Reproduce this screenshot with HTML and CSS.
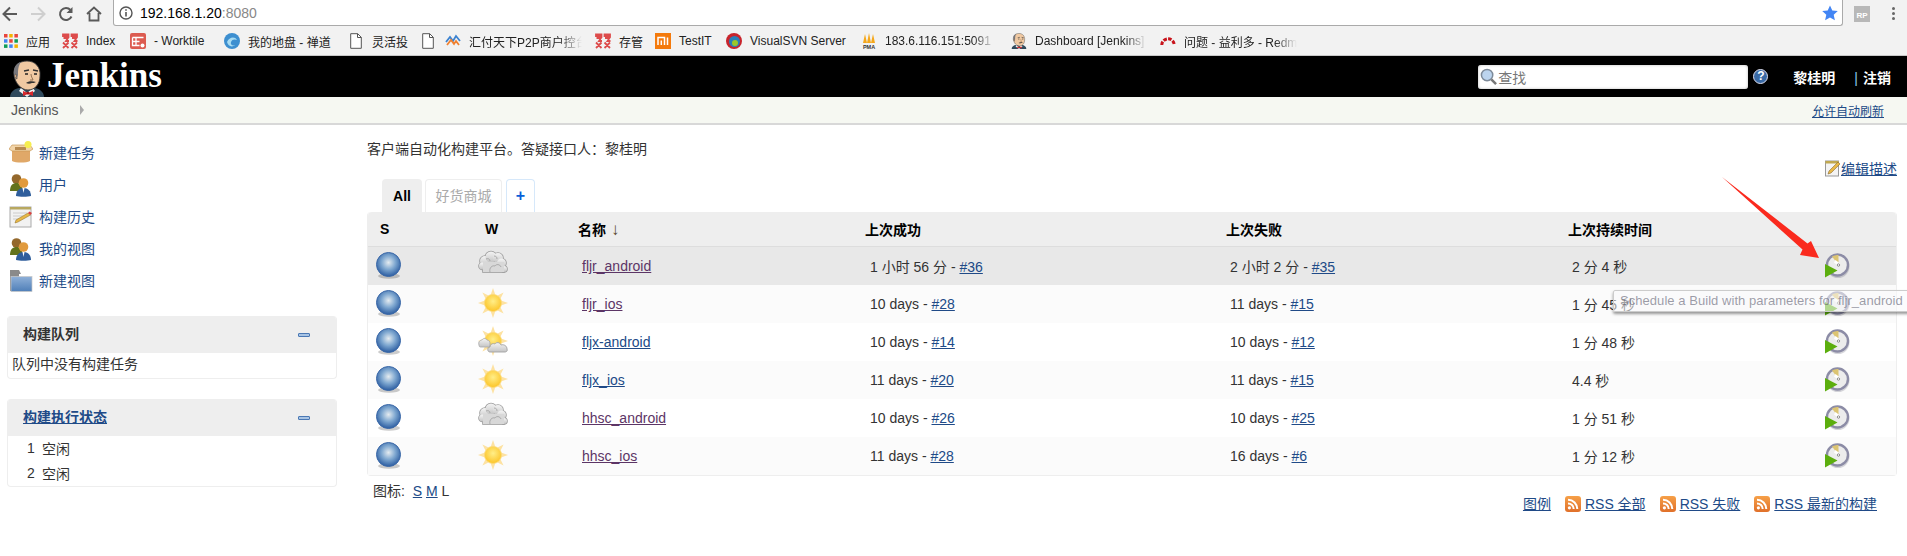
FILE: index.html
```html
<!DOCTYPE html>
<html>
<head>
    <meta http-equiv="Content-Type" content="text/html; charset=utf-8"/>
    <title>Dashboard [Jenkins]</title>
    <link rel="stylesheet" href="styles.css">
</head>
<body>
<svg class="defs" width="0" height="0">
    <defs>
        <radialGradient id="ballFill" cx="50%" cy="42%" r="58%">
            <stop offset="0" stop-color="#e4ebf0"/>
            <stop offset="0.5" stop-color="#7ea7d0"/>
            <stop offset="1" stop-color="#2b5ca0"/>
        </radialGradient>
        <radialGradient id="sunFill" cx="50%" cy="40%" r="60%">
            <stop offset="0" stop-color="#ffee88"/>
            <stop offset="1" stop-color="#fcc427"/>
        </radialGradient>
        <linearGradient id="cloudFill" x1="0" y1="0" x2="0" y2="1">
            <stop offset="0" stop-color="#f4f4f4"/>
            <stop offset="1" stop-color="#c4c4c4"/>
        </linearGradient>
        <linearGradient id="folderFill" x1="0" y1="0" x2="0" y2="1">
            <stop offset="0" stop-color="#8fb0d8"/>
            <stop offset="1" stop-color="#4f7fb8"/>
        </linearGradient>
        <linearGradient id="rssFill" x1="0" y1="0" x2="0" y2="1">
            <stop offset="0" stop-color="#f6a048"/>
            <stop offset="1" stop-color="#e0702a"/>
        </linearGradient>
        <symbol id="ball" viewBox="0 0 26 27">
            <ellipse cx="13" cy="24" rx="11" ry="2.800" fill="#000" opacity="0.2"/>
            <circle cx="12.500" cy="12.500" r="12" fill="url(#ballFill)" stroke="#3a68a8" stroke-width="1"/>
        </symbol>
        <symbol id="sunrays" viewBox="0 0 30 30">
            <g fill="#fde2a2">
                <path d="M15 0l2.400 7h-4.800z"/>
                <path d="M15 30l2.400-7h-4.800z"/>
                <path d="M0 15l7-2.400v4.800z"/>
                <path d="M30 15l-7-2.400v4.800z"/>
                <path d="M4.400 4.400l6.600 3.300-3.300 3.300z"/>
                <path d="M25.600 4.400l-6.600 3.300 3.300 3.300z"/>
                <path d="M4.400 25.600l6.600-3.300-3.300-3.300z"/>
                <path d="M25.600 25.600l-6.600-3.300 3.300-3.300z"/>
            </g>
            <circle cx="15" cy="15" r="8.500" fill="url(#sunFill)" stroke="#fbd977" stroke-width="0.800"/>
        </symbol>
        <symbol id="cloudy" viewBox="0 0 30 30">
            <g fill="#9c9c9c" stroke="#9c9c9c" stroke-width="1.600">
                <circle cx="7" cy="11" r="5"/>
                <circle cx="13" cy="7" r="5.500"/>
                <circle cx="20" cy="8" r="5"/>
                <circle cx="23.500" cy="13" r="4.500"/>
                <circle cx="4.500" cy="16" r="3.500"/>
                <circle cx="26" cy="19" r="3"/>
                <rect x="5" y="14" width="21" height="8"/>
            </g>
            <g fill="url(#cloudFill)">
                <circle cx="7" cy="11" r="5"/>
                <circle cx="13" cy="7" r="5.500"/>
                <circle cx="20" cy="8" r="5"/>
                <circle cx="23.500" cy="13" r="4.500"/>
                <circle cx="4.500" cy="16" r="3.500"/>
                <circle cx="26" cy="19" r="3"/>
            </g>
            <path d="M5 12h21v10H5z" fill="#d8d8d8"/>
            <path d="M8 9c2-1 4 0 4 2M16 6c2 0 3 1 3 3M12 22c-1-4 2-7 5-6 1-2 5-2 6 1" fill="none" stroke="#a4a4a4" stroke-width="0.900"/>
        </symbol>
        <symbol id="partly" viewBox="0 0 30 30">
            <use href="#sunrays" width="30" height="30"/>
            <path d="M1 19c-1-3 1-5 3-5 1-2 4-2 5 0 2 0 3 2 3 3v4H3c-1 0-2 0-2-2z" fill="url(#cloudFill)" stroke="#a8a8a8" stroke-width="0.800"/>
            <path d="M12 26c-3 0-3-5 0-5 0-3 3-4 5-3 1-2 5-2 6 1 3-1 6 1 6 4 1 2-1 3-2 3z" fill="url(#cloudFill)" stroke="#a2a2a2" stroke-width="0.900"/>
        </symbol>
        <symbol id="build" viewBox="0 0 25 25">
            <circle cx="13" cy="13.500" r="11.500" fill="#44445a" opacity="0.22"/>
            <circle cx="12.500" cy="12" r="10.500" fill="#ececec" stroke="#8c8ca6" stroke-width="2.400"/>
            <path d="M13.500 12L7 3.500a10 10 0 0 1 6.500-1.500z" fill="#dcc472"/>
            <path d="M10.500 7l4.500 3.500-1.500 2.500-4.500-3.500z" fill="#fff"/>
            <circle cx="13.500" cy="12" r="1.200" fill="#fff" stroke="#666" stroke-width="0.700"/>
            <path d="M0 11L12.500 17.500 0 24.500z" fill="#5cae0e"/>
        </symbol>
        <symbol id="rss" viewBox="0 0 16 16">
            <rect width="16" height="16" rx="3" fill="url(#rssFill)"/>
            <circle cx="4.400" cy="11.800" r="1.600" fill="#fff"/>
            <path d="M3 7.400a5.700 5.700 0 0 1 5.700 5.700M3 3.800a9.300 9.300 0 0 1 9.300 9.300" fill="none" stroke="#fff" stroke-width="2"/>
        </symbol>
        <symbol id="butler" viewBox="0 0 34 37">
            <path d="M0 37c0-5 5-9 10-9h14c5 0 10 4 10 9z" fill="#2f4a5c"/>
            <path d="M11 28l6 5 6-5 2 3-8 6-8-6z" fill="#f3f3f3"/>
            <path d="M4 15C3 6 9 1 17 1s14 6 13 15c0 8-5 14-12 14S5 23 4 15z" fill="#f0c9a2" stroke="#3b3b3b" stroke-width="0.900"/>
            <path d="M4 15C3 8 6 3 11 2 8 6 8 11 8 15l-1 4c-2 0-3-2-3-4z" fill="#77777c"/>
            <path d="M6 14c-2 0-2 4 1 5z" fill="#e0b48c" stroke="#3b3b3b" stroke-width="0.500"/>
            <path d="M14 11l5-1M23 10l5 1" stroke="#333" stroke-width="1.300" fill="none"/>
            <path d="M15 14h3M24 14h3" stroke="#222" stroke-width="1.300"/>
            <path d="M21 14c0 3 2 5 2 6h-3" fill="none" stroke="#7a5a40" stroke-width="0.800"/>
            <path d="M16 23c2-2 7-2 10-1-2 1-2 1-4 1-2 1-4 1-6 0z" fill="#333"/>
            <path d="M13 31l5 2 5-2v5l-5-2-5 2z" fill="#d8282c"/>
            <circle cx="18" cy="33.200" r="1.400" fill="#a81418"/>
        </symbol>
        <symbol id="zen" viewBox="0 0 16 16">
            <path d="M1 1.500h5.500v1.500H1zM9.500 1.500H15v1.500H9.500zM1.500 5h4.500l-2 3h3M10 5h4.500l-2 3h3M1 9.500l5.500 5.500M6.500 9.500L1 15M9.500 9.500L15 15M15 9.500L9.500 15" fill="none" stroke="#dd4b4b" stroke-width="1.800"/>
        </symbol>
        <symbol id="doc" viewBox="0 0 12 16">
            <path d="M.7.700h7l3.600 3.600v11H.7z" fill="#fff" stroke="#555"/>
            <path d="M7.500.7v3.800h3.800" fill="none" stroke="#555"/>
        </symbol>
        <symbol id="users" viewBox="0 0 24 24">
            <circle cx="7.500" cy="6" r="4.800" fill="#94682c"/>
            <path d="M1 18c0-6 3-8 6.500-8s6 2 6 8z" fill="#62721c"/>
            <circle cx="14.500" cy="10" r="4.800" fill="#e19a3c"/>
            <path d="M7 23c0-5 3-8 7.500-8s7.500 3 7.500 8c-3 1-12 1-15 0z" fill="#2f5e9c"/>
            <path d="M13.500 15h2l-1 5z" fill="#fff"/>
        </symbol>
    </defs>
</svg>

<div class="browser-top">
    <svg class="nav-icon" viewBox="0 0 16 16"><path d="M15 8H2M8 1.500L1.500 8 8 14.500" fill="none" stroke="#5a5a5a" stroke-width="2"/></svg>
    <svg class="nav-icon" viewBox="0 0 16 16"><path d="M1 8h13M8 1.500L14.500 8 8 14.500" fill="none" stroke="#cfcfcf" stroke-width="2"/></svg>
    <svg class="nav-icon" viewBox="0 0 16 16"><path d="M13.500 10.500A6 6 0 1 1 12.500 4" fill="none" stroke="#5a5a5a" stroke-width="2"/><path d="M14.500 1v6h-6z" fill="#5a5a5a"/></svg>
    <svg class="nav-icon" viewBox="0 0 16 16"><path d="M1 8l7-6.500L15 8M3.500 7v7.500h9V7" fill="none" stroke="#5a5a5a" stroke-width="1.800"/></svg>
    <div class="url-box">
        <svg class="url-info" viewBox="0 0 14 14"><circle cx="7" cy="7" r="6" fill="none" stroke="#555" stroke-width="1.400"/><path d="M7 6v4.500M7 3.200v1.600" stroke="#555" stroke-width="1.600"/></svg>
        <span class="url-host">192.168.1.20</span><span class="url-port">:8080</span>
        <svg class="url-star" viewBox="0 0 16 16"><path d="M8 .5l2.300 5 5.500.6-4.100 3.700 1.200 5.400L8 12.400l-4.900 2.800 1.200-5.400L.2 6.100l5.500-.6z" fill="#4285f4"/></svg>
    </div>
    <div class="ext-rp">RP</div>
    <div class="menu-dots"><i></i><i></i><i></i></div>
</div>

<div class="bookmarks">
    <div class="bm bm-apps"><svg class="bm-icon" viewBox="0 0 16 16"><g><rect x="1" y="1" width="3.500" height="3.500" fill="#e8453c"/><rect x="6.200" y="1" width="3.500" height="3.500" fill="#f4b400"/><rect x="11.400" y="1" width="3.500" height="3.500" fill="#e8453c"/><rect x="1" y="6.200" width="3.500" height="3.500" fill="#4285f4"/><rect x="6.200" y="6.200" width="3.500" height="3.500" fill="#e8453c"/><rect x="11.400" y="6.200" width="3.500" height="3.500" fill="#0f9d58"/><rect x="1" y="11.400" width="3.500" height="3.500" fill="#0f9d58"/><rect x="6.200" y="11.400" width="3.500" height="3.500" fill="#4285f4"/><rect x="11.400" y="11.400" width="3.500" height="3.500" fill="#f4b400"/></g></svg><span>应用</span></div>
    <div class="bm bm-index"><svg class="bm-icon"><use href="#zen"/></svg><span>Index</span></div>
    <div class="bm bm-worktile"><svg class="bm-icon" viewBox="0 0 16 16"><rect width="16" height="16" rx="2" fill="#dc5b50"/><path d="M2.500 4.500h11M2.500 4.500v8h7M6 4.500v8M2.500 8.500h7" fill="none" stroke="#fff" stroke-width="1.300"/><circle cx="12.500" cy="12.500" r="2" fill="#fff"/></svg><span>- Worktile</span></div>
    <div class="bm bm-zentao"><svg class="bm-icon" viewBox="0 0 16 16"><circle cx="8" cy="8" r="8" fill="#3d8fd0"/><path d="M3 9c2-5 8-6 10-2-2-1-5-1-6 2s2 4 4 3c-3 3-7 1-8-3z" fill="#a8dcf2"/></svg><span>我的地盘 - 禅道</span></div>
    <div class="bm bm-doc"><svg class="bm-icon"><use href="#doc"/></svg><span>灵活投</span></div>
    <div class="bm bm-doc2"><svg class="bm-icon"><use href="#doc"/></svg></div>
    <div class="bm bm-huifu"><svg class="bm-icon" viewBox="0 0 16 16"><path d="M1 9l4-5 3 4 3-5 4 5" fill="none" stroke="#3b82d0" stroke-width="1.800"/><path d="M2 12l4-5 3 4 2-3 3 4" fill="none" stroke="#f08030" stroke-width="1.800"/></svg><span class="bm-fade">汇付天下P2P商户控台</span></div>
    <div class="bm bm-cunguan"><svg class="bm-icon"><use href="#zen"/></svg><span>存管</span></div>
    <div class="bm bm-testit"><svg class="bm-icon" viewBox="0 0 16 16"><rect width="16" height="16" fill="#f47a0c"/><path d="M3 12V4.500h6.500V12M6.300 7.500V12M12.500 4.500V12" fill="none" stroke="#fff" stroke-width="1.500"/></svg><span>TestIT</span></div>
    <div class="bm bm-vsvn"><svg class="bm-icon" viewBox="0 0 16 16"><circle cx="8" cy="8" r="8" fill="#c8242c"/><circle cx="8.500" cy="8.500" r="5.500" fill="#2a7fb8"/><circle cx="9" cy="10" r="3" fill="#9cc82a"/></svg><span>VisualSVN Server</span></div>
    <div class="bm bm-pma"><svg class="bm-icon" viewBox="0 0 16 16"><path d="M2 10l2-9 2 9zM6 10l2-10 2 10zM10 10l2-9 2 9z" fill="#f5a81c"/><text x="8" y="15.500" class="pma-text">PMA</text></svg><span class="bm-fade">183.6.116.151:5091</span></div>
    <div class="bm bm-jenkins"><svg class="bm-icon"><use href="#butler"/></svg><span class="bm-fade">Dashboard [Jenkins]</span></div>
    <div class="bm bm-redmine"><svg class="bm-icon" viewBox="0 0 16 16"><path d="M1.800 15A6.200 6.200 0 0 1 14.200 15" fill="none" stroke="#c8141c" stroke-width="3" stroke-dasharray="3.500 1.300" transform="translate(0 -3)"/></svg><span class="bm-fade">问题 - 益利多 - Redmine</span></div>
</div>

<header class="site-header">
    <a class="logo"><svg class="logo-img"><use href="#butler"/></svg><span class="logo-text">Jenkins</span></a>
    <div class="header-right">
        <div class="search-box">
            <svg class="search-icon" viewBox="0 0 18 18"><circle cx="7.500" cy="7.500" r="6" fill="#bcd4ee" stroke="#7d8a99" stroke-width="1.600"/><path d="M12 12l5 5" stroke="#777" stroke-width="2.600"/></svg>
            <span class="search-hint">查找</span>
        </div>
        <div class="help-icon">?</div>
        <a class="user-name">黎桂明</a>
        <span class="logout"><i class="logout-bar">|</i>注销</span>
    </div>
</header>

<div class="breadcrumb">
    <span class="crumb">Jenkins</span>
    <span class="crumb-arrow"></span>
    <a class="auto-refresh" href="#">允许自动刷新</a>
</div>

<div class="page-body">
    <aside class="side-panel">
        <div class="tasks">
            <a class="task">
                <svg class="task-icon" viewBox="0 0 24 24"><path d="M3 8h18v12c-4 2-14 2-18 0z" fill="#e0a868"/><path d="M0 8l3-4h18l3 4-3 2H3z" fill="#f2d4a8" stroke="#c89858" stroke-width="0.700"/><path d="M6 6h11v3H6z" fill="#b88a50"/><circle cx="19" cy="3.500" r="3.500" fill="#f6ee50"/></svg>
                <span>新建任务</span>
            </a>
            <a class="task"><svg class="task-icon"><use href="#users"/></svg><span>用户</span></a>
            <a class="task">
                <svg class="task-icon" viewBox="0 0 24 24"><rect x="1" y="2" width="21" height="20" fill="#f2f2f2" stroke="#aaa"/><path d="M1 2h21v2.500H1z" fill="#b8a860"/><path d="M4 8h14M4 11h10M4 14h7" stroke="#ccc" stroke-width="1.200"/><path d="M6 18l1-3L19 8l2.500 2L9 17z" fill="#e8b848" stroke="#8a6a20" stroke-width="0.500"/><path d="M19 8l2.500 2 1.500-2-2.500-1.500z" fill="#d84040"/></svg>
                <span>构建历史</span>
            </a>
            <a class="task"><svg class="task-icon"><use href="#users"/></svg><span>我的视图</span></a>
            <a class="task">
                <svg class="task-icon" viewBox="0 0 24 24"><path d="M1 22V1h9l2 4h-2v3h12v14z" fill="#8a8a8a"/><rect x="2" y="7.500" width="21" height="15" fill="url(#folderFill)" stroke="#c8c8c8" stroke-width="0.700"/></svg>
                <span>新建视图</span>
            </a>
        </div>

        <div class="pane">
            <div class="pane-head"><span class="pane-title">构建队列</span><i class="collapse"></i></div>
            <div class="pane-body queue-empty">队列中没有构建任务</div>
        </div>

        <div class="pane">
            <div class="pane-head"><a class="pane-title pane-link" href="#">构建执行状态</a><i class="collapse"></i></div>
            <div class="pane-body">
                <div class="executor"><span class="exec-num">1</span><span>空闲</span></div>
                <div class="executor"><span class="exec-num">2</span><span>空闲</span></div>
            </div>
        </div>
    </aside>

    <main class="main-panel">
        <div class="desc-row">
            <div class="description">客户端自动化构建平台。答疑接口人：黎桂明</div>
            <a class="edit-desc" href="#">
                <svg class="edit-icon" viewBox="0 0 16 18"><rect x="0.500" y="2" width="13" height="15" fill="#f4f4f4" stroke="#999"/><path d="M0.500 2h13v2.500H.5z" fill="#c0a850"/><path d="M3 15l1-3 9-9 2 2-9 9z" fill="#e8b848" stroke="#7a5a20" stroke-width="0.500"/></svg><span>编辑描述</span>
            </a>
        </div>

        <div class="tabs">
            <span class="tab tab-active">All</span>
            <span class="tab tab-other">好货商城</span>
            <span class="tab tab-add">+</span>
        </div>

        <table class="projects">
            <thead>
                <tr>
                    <th>S</th>
                    <th>W</th>
                    <th>名称<span class="sort-arrow">↓</span></th>
                    <th>上次成功</th>
                    <th>上次失败</th>
                    <th>上次持续时间</th>
                    <th></th>
                </tr>
            </thead>
            <tbody>
                <tr class="row-hover">
                    <td><svg class="ball"><use href="#ball"/></svg></td>
                    <td><svg class="weather"><use href="#cloudy"/></svg></td>
                    <td><a class="seen" href="#">fljr_android</a></td>
                    <td>1 小时 56 分 - <a href="#">#36</a></td>
                    <td>2 小时 2 分 - <a href="#">#35</a></td>
                    <td>2 分 4 秒</td>
                    <td><svg class="build-icon"><use href="#build"/></svg></td>
                </tr>
                <tr class="row-alt">
                    <td><svg class="ball"><use href="#ball"/></svg></td>
                    <td><svg class="weather"><use href="#sunrays"/></svg></td>
                    <td><a class="seen" href="#">fljr_ios</a></td>
                    <td>10 days - <a href="#">#28</a></td>
                    <td>11 days - <a href="#">#15</a></td>
                    <td>1 分 45 秒</td>
                    <td><svg class="build-icon"><use href="#build"/></svg></td>
                </tr>
                <tr>
                    <td><svg class="ball"><use href="#ball"/></svg></td>
                    <td><svg class="weather"><use href="#partly"/></svg></td>
                    <td><a href="#">fljx-android</a></td>
                    <td>10 days - <a href="#">#14</a></td>
                    <td>10 days - <a href="#">#12</a></td>
                    <td>1 分 48 秒</td>
                    <td><svg class="build-icon"><use href="#build"/></svg></td>
                </tr>
                <tr class="row-alt">
                    <td><svg class="ball"><use href="#ball"/></svg></td>
                    <td><svg class="weather"><use href="#sunrays"/></svg></td>
                    <td><a href="#">fljx_ios</a></td>
                    <td>11 days - <a href="#">#20</a></td>
                    <td>11 days - <a href="#">#15</a></td>
                    <td>4.4 秒</td>
                    <td><svg class="build-icon"><use href="#build"/></svg></td>
                </tr>
                <tr>
                    <td><svg class="ball"><use href="#ball"/></svg></td>
                    <td><svg class="weather"><use href="#cloudy"/></svg></td>
                    <td><a class="seen" href="#">hhsc_android</a></td>
                    <td>10 days - <a href="#">#26</a></td>
                    <td>10 days - <a href="#">#25</a></td>
                    <td>1 分 51 秒</td>
                    <td><svg class="build-icon"><use href="#build"/></svg></td>
                </tr>
                <tr class="row-alt">
                    <td><svg class="ball"><use href="#ball"/></svg></td>
                    <td><svg class="weather"><use href="#sunrays"/></svg></td>
                    <td><a class="seen" href="#">hhsc_ios</a></td>
                    <td>11 days - <a href="#">#28</a></td>
                    <td>16 days - <a href="#">#6</a></td>
                    <td>1 分 12 秒</td>
                    <td><svg class="build-icon"><use href="#build"/></svg></td>
                </tr>
            </tbody>
        </table>

        <div class="below-table">
            <div class="icon-size">图标: <a href="#">S</a> <a href="#">M</a> <span>L</span></div>
            <div class="legend">
                <a href="#">图例</a>
                <span class="rss-item"><svg class="rss-icon"><use href="#rss"/></svg><a href="#">RSS 全部</a></span>
                <span class="rss-item"><svg class="rss-icon"><use href="#rss"/></svg><a href="#">RSS 失败</a></span>
                <span class="rss-item"><svg class="rss-icon"><use href="#rss"/></svg><a href="#">RSS 最新的构建</a></span>
            </div>
        </div>
    </main>
</div>

<div class="tooltip">Schedule a Build with parameters for fljr_android</div>
<svg class="red-arrow" viewBox="0 0 110 92"><path d="M2 2L87.500 68.400 91 66 99 83 80 80 82.500 74.600z" fill="#fa2a1e"/></svg>
</body>
</html>
```

FILE: styles.css
```css
html, body {
    margin: 0;
    padding: 0;
    overflow: hidden;
}
body {
    position: relative;
    height: 556px;
    background-color: #fff;
    color: #333;
    font-family: "Liberation Sans", "Noto Sans CJK SC", sans-serif;
    font-size: 14px;
}
a {
    color: #204a87;
    text-decoration: underline;
}
.defs {
    position: absolute;
}

/* browser chrome */
.browser-top {
    display: flex;
    align-items: center;
    height: 27px;
    padding-left: 2px;
    background-color: #f2f2f2;
}
.nav-icon {
    flex: none;
    width: 16px;
    height: 16px;
    margin-right: 12px;
}
.url-box {
    display: flex;
    align-items: center;
    flex: none;
    width: 1730px;
    height: 26px;
    margin: -1px 0 0 -1px;
    box-sizing: border-box;
    padding-left: 5px;
    background-color: #fff;
    border: 1px solid #aaa;
    border-top: none;
    border-radius: 0 0 3px 3px;
    font-size: 14px;
}
.url-info {
    width: 14px;
    height: 14px;
    margin-right: 7px;
}
.url-host {
    color: #000;
}
.url-port {
    color: #888;
}
.url-star {
    width: 16px;
    height: 16px;
    margin-left: auto;
    margin-right: 4px;
}
.ext-rp {
    flex: none;
    width: 16px;
    height: 16px;
    margin-left: 11px;
    background-color: #b8b8b8;
    color: #fff;
    font-size: 8px;
    font-weight: bold;
    line-height: 20px;
    text-align: center;
}
.menu-dots {
    display: flex;
    flex-direction: column;
    gap: 2px;
    margin-left: 22px;
}
.menu-dots i {
    width: 3px;
    height: 3px;
    background-color: #666;
    border-radius: 50%;
}

.bookmarks {
    display: flex;
    align-items: center;
    height: 28px;
    padding-left: 3px;
    background-color: #f2f2f2;
    border-bottom: 1px solid #c8c8c8;
    font-size: 12px;
    color: #222;
    white-space: nowrap;
}
.bm {
    display: flex;
    align-items: center;
    flex: none;
    gap: 8px;
    overflow: hidden;
}
.bm-icon {
    flex: none;
    width: 16px;
    height: 16px;
}
.bm-fade {
    overflow: hidden;
    -webkit-mask-image: linear-gradient(to right, #000 80%, transparent 100%);
    mask-image: linear-gradient(to right, #000 80%, transparent 100%);
}
.bm-apps { width: 59px; gap: 7px; }
.bm-index { width: 68px; }
.bm-worktile { width: 94px; }
.bm-zentao { width: 124px; }
.bm-doc { width: 72px; }
.bm-doc2 { width: 25px; }
.bm-huifu { width: 150px; }
.bm-huifu .bm-fade { width: 113px; }
.bm-cunguan { width: 60px; }
.bm-testit { width: 71px; }
.bm-vsvn { width: 135px; }
.bm-pma { width: 150px; }
.bm-pma .bm-fade { width: 110px; }
.bm-jenkins { width: 149px; }
.bm-jenkins .bm-fade { width: 112px; }
.bm-redmine { width: 150px; }
.bm-redmine .bm-fade { width: 113px; }
.pma-text {
    fill: #333;
    font-size: 5.500px;
    font-weight: bold;
    text-anchor: middle;
}

/* jenkins header */
.site-header {
    display: flex;
    align-items: center;
    height: 41px;
    background-color: #000;
    color: #fff;
}
.logo {
    display: flex;
    align-items: flex-end;
    height: 100%;
    padding-left: 10px;
    text-decoration: none;
}
.logo-img {
    width: 34px;
    height: 37px;
}
.logo-text {
    display: inline-block;
    height: 39px;
    margin: 0 0 2px 3px;
    color: #fff;
    font-family: "Liberation Serif", serif;
    font-size: 35px;
    font-weight: bold;
    line-height: 39px;
}
.header-right {
    display: flex;
    align-items: center;
    margin-left: auto;
}
.search-box {
    display: flex;
    align-items: center;
    box-sizing: border-box;
    width: 270px;
    height: 24px;
    padding-left: 2px;
    background-color: #fff;
    border-radius: 3px;
    box-shadow: inset 0 0 3px #bbb;
}
.search-icon {
    width: 17px;
    height: 17px;
}
.search-hint {
    margin-left: 1px;
    color: #777;
    font-size: 14px;
}
.help-icon {
    width: 15px;
    height: 15px;
    margin-left: 5px;
    border-radius: 50%;
    background-color: #3a6aa5;
    border: 1px solid #dde;
    box-sizing: border-box;
    color: #fff;
    font-size: 12px;
    font-weight: bold;
    line-height: 13px;
    text-align: center;
}
.user-name {
    margin-left: 25px;
    color: #fff;
    font-weight: bold;
    text-decoration: none;
}
.logout {
    margin: 0 16px 0 19px;
    color: #fff;
    font-weight: bold;
}
.logout-bar {
    margin-right: 5px;
    color: #8cc4ee;
    font-style: normal;
    font-weight: normal;
}

.breadcrumb {
    display: flex;
    align-items: center;
    box-sizing: border-box;
    height: 28px;
    padding: 0 23px 0 11px;
    background-color: #f6f8f2;
    border-bottom: 2px solid #d8d8d8;
}
.crumb {
    color: #555;
}
.crumb-arrow {
    width: 0;
    height: 0;
    margin-left: 22px;
    border-left: 4px solid #aaa;
    border-top: 5px solid transparent;
    border-bottom: 5px solid transparent;
}
.auto-refresh {
    margin-left: auto;
    font-size: 12px;
}

/* page */
.page-body {
    display: flex;
}
.side-panel {
    flex: none;
    box-sizing: border-box;
    width: 367px;
    padding: 12px 30px 0 7px;
}
.tasks {
    margin-bottom: 19px;
}
.task {
    display: flex;
    align-items: center;
    gap: 6px;
    height: 32px;
    padding-left: 2px;
    color: #204a87;
    text-decoration: none;
}
.task span {
    margin-bottom: 2px;
}
.task-icon {
    flex: none;
    width: 24px;
    height: 24px;
}
.pane {
    margin-bottom: 20px;
    border: 1px solid #eee;
    border-top: none;
    border-radius: 4px;
    overflow: hidden;
}
.pane-head {
    display: flex;
    align-items: center;
    justify-content: space-between;
    height: 37px;
    padding: 0 26px 0 15px;
    background-color: #eee;
}
.pane-title {
    margin-bottom: 3px;
    color: #333;
    font-weight: bold;
}
.pane-link {
    color: #204a87;
}
.collapse {
    width: 10px;
    height: 2px;
    border: 1px solid #4a78b4;
    border-radius: 1px;
    background-color: #a8c4e4;
}
.queue-empty {
    padding: 1px 0 4px 4px;
    line-height: 20px;
}
.executor {
    display: flex;
    align-items: center;
    box-sizing: border-box;
    height: 25px;
    padding: 0 0 2px 19px;
}
.exec-num {
    width: 15px;
}

.main-panel {
    flex: none;
    width: 1530px;
}
.desc-row {
    display: flex;
    justify-content: space-between;
    height: 40px;
    margin-top: 14px;
}
.description {
    line-height: 20px;
}
.edit-desc {
    display: flex;
    align-items: center;
    align-self: flex-end;
    height: 20px;
    margin-bottom: 1px;
}
.edit-icon {
    width: 16px;
    height: 18px;
}
.tabs {
    display: flex;
    align-items: flex-end;
    gap: 3px;
    height: 33px;
    padding-left: 15px;
}
.tab {
    box-sizing: border-box;
    height: 33px;
    line-height: 34px;
    text-align: center;
    border-radius: 4px 4px 0 0;
}
.tab-active {
    width: 40px;
    background-color: #eee;
    color: #000;
    font-weight: bold;
}
.tab-other {
    width: 77px;
    line-height: 32px;
    border: 1px solid #eee;
    border-bottom: none;
    color: #aaa;
}
.tab-add {
    width: 29px;
    margin-left: 1px;
    line-height: 32px;
    border: 1px solid #d6e8fa;
    border-bottom: none;
    color: #0a5fd8;
    font-weight: bold;
    font-size: 16px;
}

.projects {
    width: 100%;
    table-layout: fixed;
    border-collapse: separate;
    border-spacing: 0;
    border: 1px solid #eee;
    border-top: none;
    border-radius: 4px;
    box-sizing: border-box;
}
.projects th {
    box-sizing: border-box;
    height: 35px;
    padding: 0 0 1px;
    text-align: left;
    color: #000;
    background-color: #eee;
    border-bottom: 1px solid #ddd;
}
.projects td {
    height: 38px;
    padding: 0;
    vertical-align: middle;
}
.projects th:first-child {
    border-top-left-radius: 4px;
}
.projects th:last-child {
    border-top-right-radius: 4px;
}
.projects th:nth-child(1) { width: 104px; padding-left: 12px; }
.projects th:nth-child(2) { width: 100px; padding-left: 13px; }
.projects th:nth-child(3) { width: 288px; padding-left: 6px; }
.projects th:nth-child(4) { width: 362px; padding-left: 5px; }
.projects th:nth-child(5) { width: 343px; padding-left: 4px; }
.projects th:nth-child(6) { width: 250px; padding-left: 3px; }
.projects td:nth-child(1) { padding-left: 8px; }
.projects td:nth-child(2) { padding-left: 6px; }
.projects td:nth-child(3) { padding-left: 10px; }
.projects td:nth-child(4) { padding-left: 10px; }
.projects td:nth-child(5) { padding-left: 8px; }
.projects td:nth-child(6) { padding-left: 7px; }
.projects td:nth-child(7) { padding-left: 10px; }
.projects a.seen {
    color: #5c3566;
}
.row-hover td {
    background-color: #e8e8e8;
}
.row-alt td {
    background-color: #fbfbfb;
}
.sort-arrow {
    margin-left: 5px;
    color: #5a4a30;
    font-size: 17px;
    font-weight: normal;
    line-height: 14px;
}
.ball {
    display: block;
    width: 26px;
    height: 27px;
    margin-bottom: 2px;
}
.weather {
    display: block;
    width: 30px;
    height: 30px;
    margin-bottom: 2px;
}
.build-icon {
    display: block;
    width: 25px;
    height: 25px;
    margin-bottom: 2px;
}

.below-table {
    display: flex;
    justify-content: space-between;
    align-items: flex-start;
    padding: 5px 20px 0 6px;
}
.icon-size {
    line-height: 20px;
}
.icon-size a:first-child {
    margin-left: 4px;
}
.legend {
    display: flex;
    align-items: center;
    gap: 14px;
    margin-top: 13px;
    line-height: 20px;
}
.rss-item {
    display: flex;
    align-items: center;
    gap: 4px;
}
.rss-icon {
    width: 16px;
    height: 16px;
}

/* things lying over the page */
.tooltip {
    position: absolute;
    left: 1613px;
    top: 290px;
    width: 300px;
    height: 22px;
    box-sizing: border-box;
    padding-left: 6px;
    border: 1px solid #ccc;
    border-radius: 2px;
    background-color: rgba(250, 250, 252, 0.55);
    box-shadow: 0 2px 3px rgba(0, 0, 0, 0.4);
    color: rgba(90, 90, 110, 0.6);
    font-size: 13px;
    letter-spacing: 0.05px;
    line-height: 20px;
    white-space: nowrap;
}
.red-arrow {
    position: absolute;
    left: 1720px;
    top: 175px;
    width: 110px;
    height: 92px;
}
```
